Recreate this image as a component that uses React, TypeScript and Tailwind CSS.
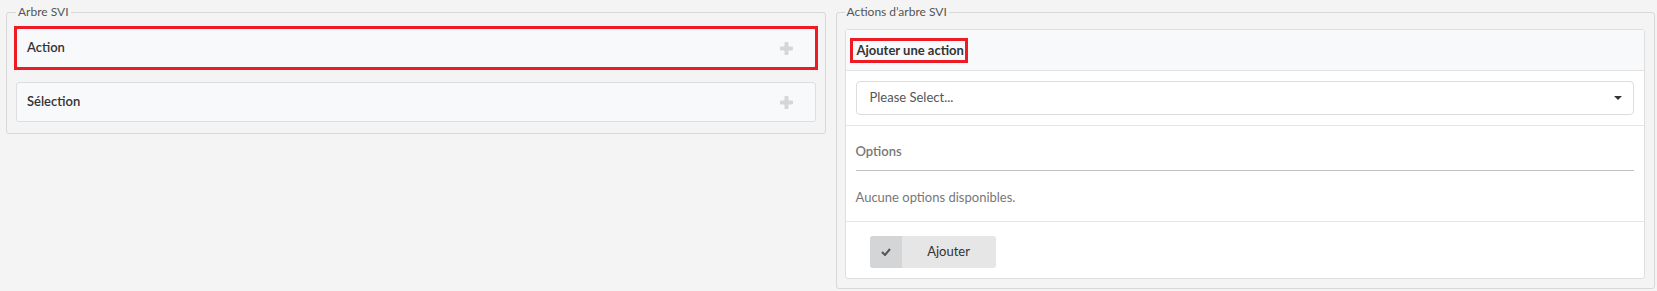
import React from "react";

const font = { fontFamily: "Lato, 'Open Sans', Arial, sans-serif" };

function Plus() {
  return (
    <svg width="13" height="13" viewBox="0 0 13 13" className="text-[#d6d6d6]">
      <rect x="4.5" y="0" width="4" height="13" rx="1" fill="currentColor" />
      <rect x="0" y="4.5" width="13" height="4" rx="1" fill="currentColor" />
    </svg>
  );
}

function TreePanel({ label, marked }: { label: string; marked?: boolean }) {
  return (
    <div className={marked ? "outline-[3px] outline-solid outline-[#ed1c24] -outline-offset-1" : ""}>
      <div className="flex h-[40px] items-center justify-between rounded-[3px] border border-[#dedede] bg-[#f8f9fa] pl-[10px] pr-[22px]">
        <span className="text-[13px] font-semibold text-[#333]">{label}</span>
        <Plus />
      </div>
    </div>
  );
}

export default function App() {
  return (
    <div style={font} className="min-h-[291px] w-full bg-[#f4f4f4] pt-[4px] text-[13px] text-[#333]">
      <div className="grid grid-cols-2 items-start gap-[10px] pl-[6px] pr-[2px]">
        {/* Arbre SVI */}
        <fieldset className="rounded-[3px] border border-[#d8d8d8] px-[9px] pt-[8px] pb-[11px]">
          <legend className="px-[2px] text-[12px] leading-[16px] text-[#555]">Arbre SVI</legend>
          <div className="flex flex-col gap-[14px]">
            <TreePanel label="Action" marked />
            <TreePanel label="Sélection" />
          </div>
        </fieldset>

        {/* Actions d'arbre SVI */}
        <fieldset className="rounded-[3px] border border-[#d8d8d8] pl-[8px] pr-[9px] pt-[9px] pb-[9px]">
          <legend className="px-[2px] text-[12px] leading-[16px] text-[#555]">Actions d’arbre SVI</legend>
          <div className="rounded-[3px] border border-[#dedede] bg-white">
            <div className="flex h-[41px] items-center border-b border-[#e3e3e3] bg-[#f8f9fa] pl-[4px]">
              <span className="inline-block border-[3px] border-[#ed1c24] pl-[4px] pr-[1px] text-[13px] font-bold leading-[19px] text-[#333]">
                Ajouter une action
              </span>
            </div>

            <div className="border-b border-[#e6e6e6] p-[10px]">
              <div className="flex h-[34px] items-center justify-between rounded-[4px] border border-[#dcdcdc] bg-white pl-[13px] pr-[11px] text-[#555]">
                <span>Please Select...</span>
                <svg width="8" height="4" viewBox="0 0 8 4">
                  <path d="M0 0h8L4 4z" fill="#333" />
                </svg>
              </div>
            </div>

            <div className="border-b border-[#e6e6e6] px-[10px] pt-[15px] pb-[14px]">
              <div className="border-b border-[#c0c0c0] pb-[9px] text-[13px] font-semibold leading-[20px] text-[#777]">
                Options
              </div>
              <div className="mt-[16px] leading-[20px] text-[#777]">Aucune options disponibles.</div>
            </div>

            <div className="pt-[14px] pb-[10px] pl-[24px]">
              <button className="flex h-[32px] w-[126px] overflow-hidden rounded-[3px] bg-[#e6e6e6] text-[#333]">
                <span className="flex h-full w-[32px] items-center justify-center bg-[#d4d5d7]">
                  <svg width="10" height="8" viewBox="0 0 10 8">
                    <path d="M1 4l3 3 5-6" fill="none" stroke="#555" strokeWidth="2" />
                  </svg>
                </span>
                <span className="flex flex-1 items-center justify-center text-[13px]">Ajouter</span>
              </button>
            </div>
          </div>
        </fieldset>
      </div>
    </div>
  );
}
